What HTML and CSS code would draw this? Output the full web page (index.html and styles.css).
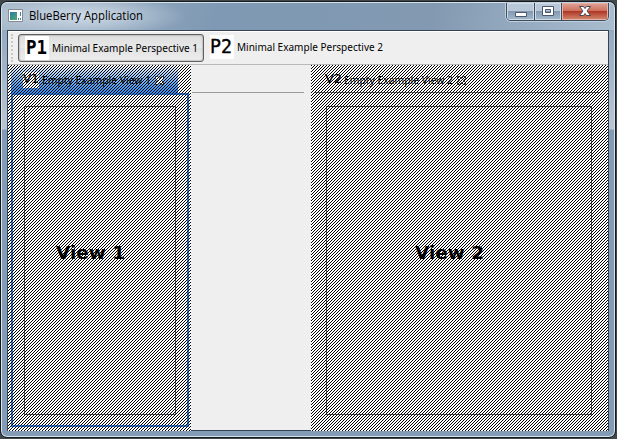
FILE: index.html
```html
<!DOCTYPE html>
<html lang="en">
<head>
<meta charset="utf-8">
<title>BlueBerry Application</title>
<link rel="stylesheet" href="styles.css">
</head>
<body>
<div class="window">
  <header class="titlebar">
    <svg class="app-icon" width="15" height="13" viewBox="0 0 15 13"><defs><linearGradient id="app" x2="1" y2="1"><stop stop-color="#287aa6"/><stop offset="1" stop-color="#51ac70"/></linearGradient></defs><path fill="#fff" stroke="#858b91" d="M.5.5h14v12H.5z"/><path fill="url(#app)" d="M2 3h7v8H2z"/><path fill="#4689a6" d="M10 9h1v2h-1zM12 3h1v4h-1zM12 9h1v2h-1z"/></svg>
    <svg class="title" width="130" height="20"><text x="0" y="14" textLength="114" lengthAdjust="spacingAndGlyphs">BlueBerry Application</text></svg>
    <div class="controls">
      <button class="control min" aria-label="Minimize"><svg width="14" height="8" viewBox="0 0 14 8"><path fill="#fff" stroke="#4b586b" d="M1.500 2.500h11v4h-11z"/></svg></button>
      <button class="control max" aria-label="Maximize"><svg width="14" height="12" viewBox="0 0 14 12"><path fill="#fff" fill-rule="evenodd" stroke="#4b586b" d="M1.500 1.500h11v9h-11zM4.500 4.500v3h5v-3z"/></svg></button>
      <button class="control close" aria-label="Close"><svg width="14" height="12" viewBox="0 0 14 12"><path fill="#fff" stroke="#4b4650" d="M1.500 1.500h4L7 3.500l1.500-2h4L9 6l3.500 4.500h-4L7 8.500l-1.500 2h-4L5 6z"/></svg></button>
    </div>
  </header>
  <main class="client">
    <nav class="toolbar">
      <span class="grip"></span>
      <button class="tool active"><svg width="190" height="24"><rect width="24" height="24" fill="#fff"/><text class="mark bold" x="1" y="18" textLength="21" lengthAdjust="spacingAndGlyphs">P1</text><text class="label" x="27" y="16" textLength="146" lengthAdjust="spacingAndGlyphs">Minimal Example Perspective 1</text></svg></button>
      <button class="tool"><svg width="190" height="24"><rect width="24" height="24" fill="#fff"/><text class="mark" x="0" y="18" textLength="22" lengthAdjust="spacingAndGlyphs">P2</text><text class="label" x="27" y="16" textLength="146" lengthAdjust="spacingAndGlyphs">Minimal Example Perspective 2</text></svg></button>
    </nav>
    <div class="workspace">
      <section class="view first">
        <div class="tab"><svg width="166" height="28"><rect x="12" y="7" width="16" height="16" fill="#fff"/><text class="view-mark" x="12" y="18" textLength="16" lengthAdjust="spacingAndGlyphs">V1</text><text class="label" x="31" y="19" textLength="109" lengthAdjust="spacingAndGlyphs">Empty Example View 1</text><path class="tab-close" d="M144.500 11.500h2l2 2 2-2h2v2l-2 2 2 2v2h-2l-2-2-2 2h-2v-2l2-2-2-2z"/></svg></div>
        <div class="pane"><div class="content"><svg width="70" height="24"><text class="heading" x="0" y="18" textLength="69" lengthAdjust="spacingAndGlyphs">View 1</text></svg></div></div>
        <svg class="hatch"><defs><pattern id="hatch" width="3" height="3" patternUnits="userSpaceOnUse"><path fill="#000" d="M0 0h1v1H0zM2 1h1v1H2zM1 2h1v1H1z"/></pattern></defs><rect width="100%" height="100%" fill="url(#hatch)"/></svg>
      </section>
      <div class="gap"></div>
      <section class="view second">
        <div class="tab"><svg width="166" height="28"><text class="view-mark" x="11" y="18" textLength="17" lengthAdjust="spacingAndGlyphs">V2</text><text class="label" x="30" y="19" textLength="109" lengthAdjust="spacingAndGlyphs">Empty Example View 2</text><path class="tab-close" d="M143.500 11.500h2l2 2 2-2h2v2l-2 2 2 2v2h-2l-2-2-2 2h-2v-2l2-2-2-2z"/></svg></div>
        <div class="pane"><div class="content"><svg width="70" height="24"><text class="heading" x="0" y="18" textLength="69" lengthAdjust="spacingAndGlyphs">View 2</text></svg></div></div>
        <svg class="hatch"><rect width="100%" height="100%" fill="url(#hatch)"/></svg>
      </section>
    </div>
  </main>
</div>
</body>
</html>
```
FILE: styles.css
```css
* { box-sizing: border-box; }
body { margin: 0; width: 617px; height: 439px; overflow: hidden; background: #41484a; }
svg { display: block; flex-shrink: 0; }
button { padding: 0; border: 0; background: none; }
.window { width: 616px; height: 437px; margin-top: 1px; padding: 0 6px 5px; border: 1px solid #171b20; border-radius: 7px; background: linear-gradient(#8ba3bd 0, #a9bacb 85px, #bac5d3 127px, #839bb5 128px, #839bb5); box-shadow: inset 0 0 0 1px #d4e2ee; }
.titlebar { height: 28px; margin: 0 -5px; padding-left: 6px; display: flex; align-items: flex-start; border-radius: 6px 6px 0 0; background: radial-gradient(ellipse 100px 21px at 84px 13px, rgba(225,235,244,.75), transparent), linear-gradient(100deg, #a9bacb, #7f99b4 35%, #8299b1 70%, #a9bdcf); border-top: 1px solid #d6e2eb; }
.app-icon { margin-top: 6px; }
.title { margin: 3px 0 0 6px; font: 12px "Open Sans", sans-serif; fill: #000; }
.controls { display: flex; margin-left: auto; margin-right: 5px; width: 103px; height: 18px; border: 1px solid #3e4c5e; border-top: 0; border-radius: 0 0 5px 5px; overflow: hidden; box-shadow: 0 0 0 1px #c0cfdd; }
.control { width: 28px; display: flex; justify-content: center; align-items: center; border-right: 1px solid #3e4c5e; box-shadow: inset 0 0 0 1px #d0dbe6; background: linear-gradient(#b8c8d8 0 47%, #8198b0 48%, #a5bace); }
.max { width: 27px; }
.control svg { margin-top: -1px; }
.min svg { margin-top: 4px; }
.close { width: 46px; border: 0; background: linear-gradient(#dfa497, #ce705d 46%, #ae3524 48%, #d58b71); box-shadow: inset 0 0 0 1px #e4b3a7; }
.client { width: 602px; height: 401px; border: 1px solid #344252; background: #efefef; }
.toolbar { height: 34px; padding: 2px 0 0 3px; display: flex; align-items: flex-start; border-bottom: 1px solid #b8b8b8; border-top: 1px solid #fff; }
.grip { width: 3px; height: 28px; margin-right: 4px; border-left: 2px dotted #c8c8c8; }
.tool { display: flex; height: 28px; width: 186px; padding: 0 5px 2px; border: 1px solid transparent; }
.tool.active { border: 1px solid #5f5f5f; border-radius: 3px; padding: 1px 6px; background: linear-gradient(#dedede, #e9e9e9 50%, #e2e2e2 51%, #eee); box-shadow: inset 0 0 2px #777; }
.label { font: 11px "Noto Sans", "Open Sans", sans-serif; fill: #000; }
.mark { font: 19px "DejaVu Sans Mono", monospace; stroke: #000; stroke-width: .4px; }
.bold { font-weight: bold; stroke: none; }
.view-mark { font: 13px "DejaVu Sans", sans-serif; stroke: #000; stroke-width: .2px; }
.heading { font: bold 18px "DejaVu Sans", sans-serif; }
.tab-close { fill: #fff; stroke: #333; }
.workspace { height: 365px; display: grid; grid-template-columns: 183px 120px 297px; }
.view { position: relative; padding: 0 2px 3px 3px; background: #fff; }
.tab { height: 28px; }
.first .tab { width: 167px; border-radius: 3px 5px 0 0; background: linear-gradient(#fff, #b9d9fc 25%, #51a0f4 75%, #3b91ee); }
.pane { height: 334px; padding: 11px; }
.first .pane { border: 2px solid #2583e8; }
.content { height: 309px; display: flex; align-items: center; justify-content: center; border: 1px solid #50535a; padding-bottom: 16px; }
.first .content { padding-right: 18px; }
.second .content { padding-right: 18px; }
.second { padding-right: 8px; }
.second .pane { margin-top: -1px; height: 336px; border-top: 1px solid #666; padding: 13px 8px 12px 12px; }
.hatch { position: absolute; inset: 0; width: 100%; height: 100%; shape-rendering: crispEdges; }
.gap { height: 28px; margin: 0 7px 0 1px; border-bottom: 1px solid #999; }
```
